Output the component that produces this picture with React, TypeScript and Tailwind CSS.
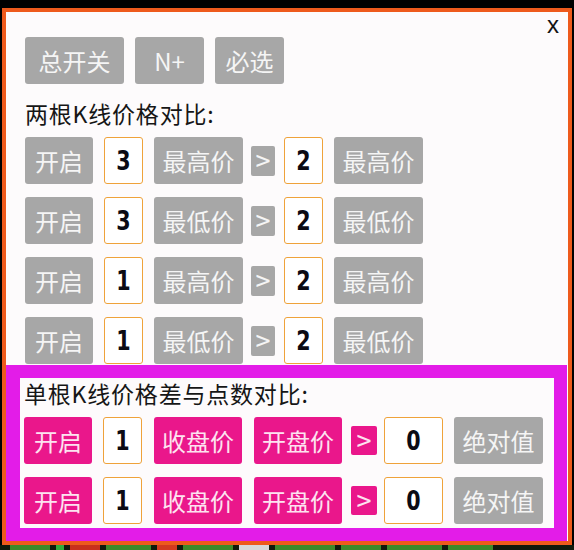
import React from 'react';

const cjk = { fontFamily: '"Noto Sans CJK SC", "Noto Sans", sans-serif' };
const digit = { fontFamily: '"DejaVu Sans Condensed", "DejaVu Sans", sans-serif' };

const priceRows = [
  { n: '3', a: '最高价', m: '2', b: '最高价' },
  { n: '3', a: '最低价', m: '2', b: '最低价' },
  { n: '1', a: '最高价', m: '2', b: '最高价' },
  { n: '1', a: '最低价', m: '2', b: '最低价' },
];

const GrayBtn = ({ label, w, className = '' }: { label: string; w: string; className?: string }) => (
  <div className={`${w} ${className} h-[47px] shrink-0 rounded-[3px] bg-[#a7a7a7] text-[#f5f5f5] text-[24px] leading-none flex items-center justify-center`}>
    {label}
  </div>
);

const PinkBtn = ({ label, w, className = '' }: { label: string; w: string; className?: string }) => (
  <div className={`${w} ${className} h-[47px] shrink-0 rounded-[3px] bg-[#ea178b] text-[#fde3f0] text-[24px] leading-none flex items-center justify-center`}>
    {label}
  </div>
);

const NumBox = ({ value, w, className = '' }: { value: string; w: string; className?: string }) => (
  <div
    style={digit}
    className={`${w} ${className} h-[47px] shrink-0 rounded-[3px] border-[1.5px] border-[#efa23a] bg-white text-[#0b0b14] text-[27px] font-bold font-stretch-condensed leading-none flex items-center justify-center`}
  >
    <span className="inline-block scale-x-[0.85]">{value}</span>
  </div>
);

export default function App() {
  return (
    <div style={cjk} className="w-[574px] h-[550px] bg-black overflow-hidden flex flex-col">
      <div className="h-[8px] shrink-0" />
      {/* panel */}
      <div className="relative ml-[2px] w-[570px] h-[537px] shrink-0 border-4 border-[#ee5a1c] bg-[#fdfbfc] flex flex-col">
        <button className="absolute right-[9px] top-[-2px] text-[24px] leading-[30px] text-[#141414]" style={{ fontFamily: '"Liberation Sans", sans-serif' }}>
          x
        </button>

        <div className="pl-[19px] pt-[25px]">
          <div className="flex gap-[11px]">
            <GrayBtn label="总开关" w="w-[99px]" />
            <GrayBtn label="N+" w="w-[69px]" />
            <GrayBtn label="必选" w="w-[69px]" />
          </div>

          <div className="mt-[14px] text-[23px] leading-[30px] tracking-[0.8px] text-[#161616]">两根K线价格对比:</div>

          <div className="mt-[9px] flex flex-col gap-[13px]">
            {priceRows.map((r, i) => (
              <div key={i} className="flex items-center">
                <GrayBtn label="开启" w="w-[68px]" />
                <NumBox value={r.n} w="w-[39px]" className="ml-[11px]" />
                <GrayBtn label={r.a} w="w-[89px]" className="ml-[11px]" />
                <div className="ml-[8px] w-[24px] h-[30px] shrink-0 rounded-[2px] bg-[#a7a7a7] text-[#f5f5f5] text-[27px] leading-none flex items-center justify-center pb-[2px]">&gt;</div>
                <NumBox value={r.m} w="w-[39px]" className="ml-[9px]" />
                <GrayBtn label={r.b} w="w-[89px]" className="ml-[11px]" />
              </div>
            ))}
          </div>
        </div>

        {/* highlighted block */}
        <div className="mt-[1px] w-[561px] flex-1 border-[13px] border-l-[14px] border-[#e31ce8] bg-[#fdfbfc] pl-[4px]">
          <div className="text-[23px] leading-[30px] tracking-[0.8px] text-[#161616]">单根K线价格差与点数对比:</div>
          <div className="mt-[9px] flex flex-col gap-[13px]">
            {[0, 1].map((i) => (
              <div key={i} className="flex items-center">
                <PinkBtn label="开启" w="w-[68px]" />
                <NumBox value="1" w="w-[39px]" className="ml-[11px]" />
                <PinkBtn label="收盘价" w="w-[88px]" className="ml-[12px]" />
                <PinkBtn label="开盘价" w="w-[88px]" className="ml-[12px]" />
                <div className="ml-[9px] w-[26px] h-[29px] shrink-0 rounded-[2px] bg-[#ea178b] text-[#fde3f0] text-[27px] leading-none flex items-center justify-center pb-[2px]">&gt;</div>
                <NumBox value="0" w="w-[59px]" className="ml-[7px]" />
                <GrayBtn label="绝对值" w="w-[89px]" className="ml-[11px]" />
              </div>
            ))}
          </div>
        </div>
      </div>

      {/* chart strip peeking out below */}
      <div className="flex h-[5px] gap-[6px] bg-[#101a0c] px-[10px]">
        <div className="w-[40px] bg-[#3c8a2a]" />
        <div className="w-[8px] bg-[#2fae3a]" />
        <div className="w-[30px] bg-[#c8301c]" />
        <div className="w-[45px] bg-[#3c8a2a]" />
        <div className="w-[20px] bg-[#d23a1f]" />
        <div className="w-[50px] bg-[#3c8a2a]" />
        <div className="w-[30px] bg-[#d8d8d8]" />
        <div className="w-[60px] bg-[#3c8a2a]" />
        <div className="w-[40px] bg-[#3c8a2a]" />
        <div className="w-[55px] bg-[#3c8a2a]" />
        <div className="w-[45px] bg-[#3c8a2a]" />
      </div>
    </div>
  );
}
